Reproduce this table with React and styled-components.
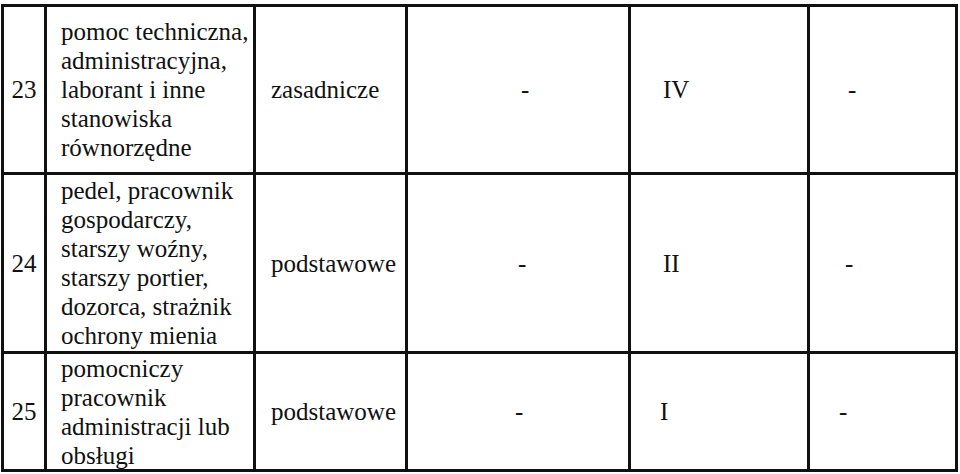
import React from 'react';
import styled, { createGlobalStyle } from 'styled-components';

const GlobalStyle = createGlobalStyle`
  html, body {
    margin: 0;
    padding: 0;
    background: #fff;
  }
  body {
    font-family: "Liberation Serif", "Times New Roman", serif;
    color: #111;
  }
`;

const Table = styled.div`
  display: grid;
  grid-template-columns: 40px 206px 149px 220px 176px 145px;
  grid-template-rows: 165px 176px 115px;
  gap: 3px;
  padding: 3px;
  background: #111;
  width: max-content;
  margin: 4px 0 0 1px;
`;

const Cell = styled.div`
  background: #fff;
  display: flex;
  align-items: center;
  font-size: 25px;
  line-height: 29px;
  white-space: nowrap;
  overflow: hidden;
`;

const NumCell = styled(Cell)`
  justify-content: center;
`;

const DescCell = styled(Cell)`
  padding-left: 14px;
`;

const Lines = styled.div`
  display: flex;
  flex-direction: column;
`;

const ValueCell = styled(Cell)`
  padding-left: ${(p) => p.$pad}px;
`;

const rows = [
  {
    no: '23',
    desc: ['pomoc techniczna,', 'administracyjna,', 'laborant i inne', 'stanowiska', 'równorzędne'],
    edu: 'zasadnicze',
    cat: 'IV',
    pads: [15, 113, 32, 38],
  },
  {
    no: '24',
    desc: ['pedel, pracownik', 'gospodarczy,', 'starszy woźny,', 'starszy portier,', 'dozorca, strażnik', 'ochrony mienia'],
    edu: 'podstawowe',
    cat: 'II',
    pads: [15, 110, 32, 35],
  },
  {
    no: '25',
    desc: ['pomocniczy', 'pracownik', 'administracji lub', 'obsługi'],
    edu: 'podstawowe',
    cat: 'I',
    pads: [15, 107, 29, 29],
  },
];

const App = () => {
  return (
    <>
      <GlobalStyle />
      <Table>
        {rows.map((row) => (
          <React.Fragment key={row.no}>
            <NumCell>{row.no}</NumCell>
            <DescCell>
              <Lines>
                {row.desc.map((line) => (
                  <span key={line}>{line}</span>
                ))}
              </Lines>
            </DescCell>
            <ValueCell $pad={row.pads[0]}>{row.edu}</ValueCell>
            <ValueCell $pad={row.pads[1]}>-</ValueCell>
            <ValueCell $pad={row.pads[2]}>{row.cat}</ValueCell>
            <ValueCell $pad={row.pads[3]}>-</ValueCell>
          </React.Fragment>
        ))}
      </Table>
    </>
  );
};

export default App;
